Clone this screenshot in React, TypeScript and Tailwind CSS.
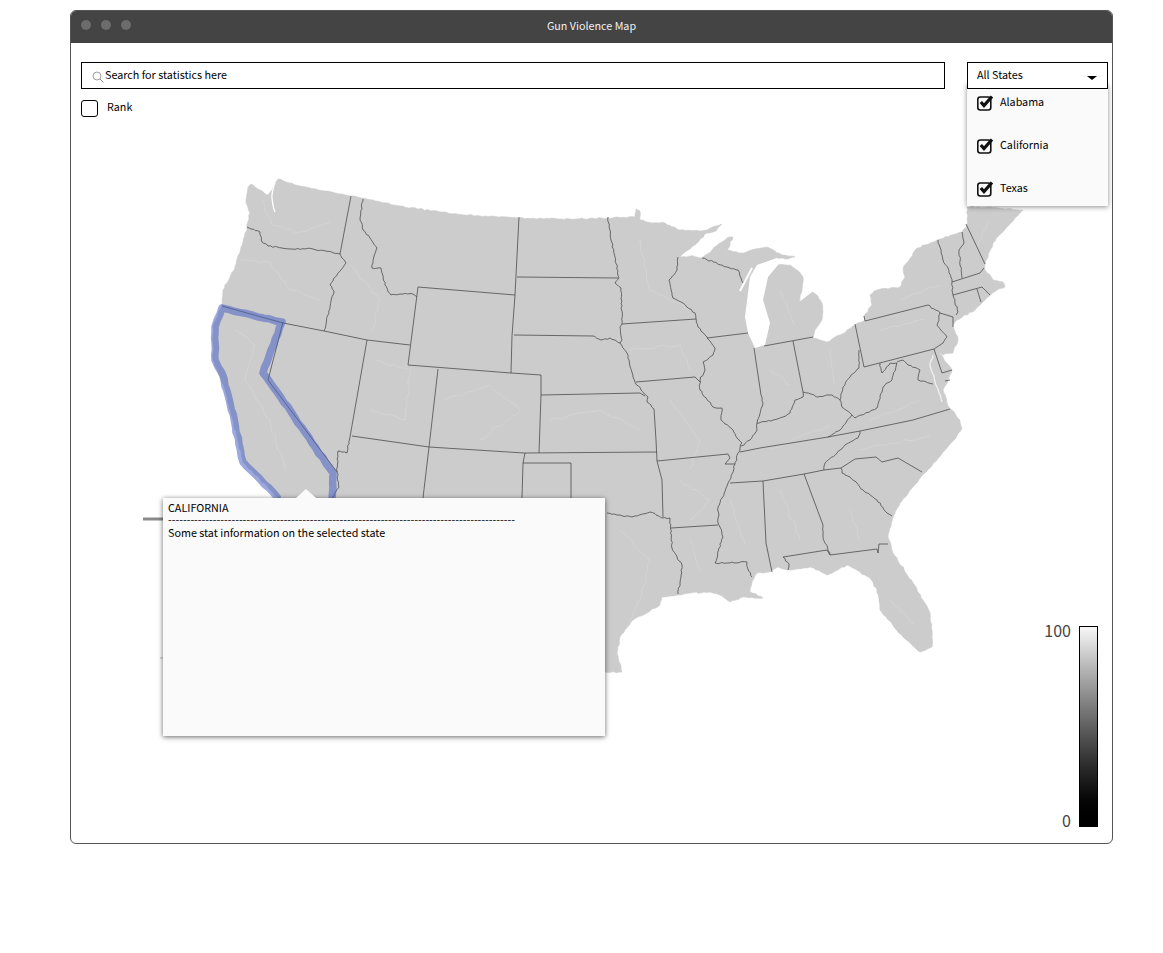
const FONT = "font-['Noto_Sans_CJK_JP','Noto_Sans',sans-serif]";

function wiggle(d: string, amp: number, step: number, seed: number) {
  let s = seed;
  const rnd = () => {
    s = (s * 16807) % 2147483647;
    return (s % 2000) / 1000 - 1;
  };
  const closed = d.trim().endsWith("Z");
  return d
    .replace("Z", "")
    .split("M")
    .filter((p) => p.trim())
    .map((sub) => {
      const pts = sub
        .trim()
        .split("L")
        .map((p) => p.trim().split(",").map(Number));
      let out = `M${pts[0][0]},${pts[0][1]}`;
      for (let i = 1; i < pts.length; i++) {
        const [x0, y0] = pts[i - 1];
        const [x1, y1] = pts[i];
        const len = Math.hypot(x1 - x0, y1 - y0);
        const n = Math.max(1, Math.round(len / step));
        for (let k = 1; k <= n; k++) {
          const t = k / n;
          const j = k === n ? 0 : amp;
          out += ` L${(x0 + (x1 - x0) * t + rnd() * j).toFixed(1)},${(y0 + (y1 - y0) * t + rnd() * j).toFixed(1)}`;
        }
      }
      return out + (closed ? " Z" : "");
    })
    .join(" ");
}

const OUTLINE =
  "M248,187 L251,184 L258,189 L268,195 L272,190 L276,182 L278,179 L300,186 L325,191 L351,196 L361,198 L400,206 L440,212 L480,216 L519,218 L570,219 L608,218 L635,217 L636,209 L640,211 L640,220 L653,223 L665,223 L680,230 L700,231 L707,230 L722,224 L716,231 L707,233 L695,245 L685,252 L680,257 L690,256 L702,258 L712,250 L727,238 L733,237 L727,250 L743,253 L755,249 L767,247 L775,251 L782,255 L795,257 L785,259 L777,258 L768,262 L778,265 L790,265 L797,270 L803,277 L802,290 L799,302 L806,297 L812,292 L818,296 L822,303 L823,312 L822,320 L815,330 L813,338 L820,340 L827,342 L840,335 L855,325 L865,320 L864,316 L872,305 L870,295 L877,290 L900,287 L905,277 L903,268 L917,248 L937,240 L962,232 L967,225 L967,207 L990,207 L1023,210 L1015,218 L1007,227 L993,243 L985,265 L985,270 L993,280 L1003,282 L1005,287 L997,290 L988,297 L983,302 L975,310 L957,320 L953,325 L958,340 L953,353 L943,355 L938,351 L952,370 L948,380 L943,390 L947,403 L952,410 L960,420 L962,428 L956,438 L947,448 L930,468 L913,487 L900,503 L893,517 L888,535 L893,553 L913,583 L923,600 L930,613 L932,637 L932,647 L920,652 L913,646 L903,637 L880,610 L877,590 L870,578 L847,565 L827,575 L810,567 L788,570 L778,567 L770,572 L757,573 L752,582 L750,592 L763,598 L743,597 L730,602 L722,596 L710,592 L690,593 L677,595 L662,597 L660,605 L633,620 L620,637 L617,653 L622,672 L605,672 L590,650 L570,610 L560,600 L520,590 L500,580 L470,590 L440,560 L400,540 L330,530 L290,505 L277,497 L243,462 L232,417 L225,390 L213,360 L213,327 L222,305 L223,290 L235,267 L247,228 L250,213 L246,200 Z";

const STRAIGHT = [
  "M222,306 L283,323 L324,331 L367,340 L410,345",
  "M351,196 L340,254",
  "M418,287 L515,295 L512,336 L511,373 L408,365 Z",
  "M519,217 L515,295",
  "M517,277 L618,278",
  "M514,335 L593,336",
  "M511,373 L541,375 L541,395 L640,393 L645,396",
  "M438,369 L429,447 L423,498",
  "M541,395 L539,453",
  "M352,436 L429,447 L524,453 L657,452",
  "M525,453 L523,463 L571,463 L571,498",
  "M523,463 L522,498",
  "M671,528 L718,525",
  "M657,461 L728,454 L730,458 L725,464 L735,464",
  "M622,324 L696,319",
  "M636,382 L695,377 L700,382",
  "M707,338 L748,333",
  "M654,409 L656,440 L657,461 L662,480 L663,517",
  "M730,483 L763,481 L804,474 L824,470 L841,468 L855,459 L876,457 L882,462 L898,458 L922,472",
  "M763,481 L766,543 L772,572",
  "M804,474 L823,525",
  "M783,557 L827,550 L830,555 L877,549 L878,553 L879,544 L888,544",
  "M740,452 L760,448 L828,437 L860,431 L913,420 L950,409",
  "M855,324 L864,367 L934,349 L943,343",
  "M928,305 L865,321 L864,316",
  "M934,349 L942,373 L952,370",
  "M945,381 L950,380",
  "M754,348 L761,395",
  "M793,341 L803,392",
  "M764,346 L813,337",
  "M966,224 L985,264",
  "M952,282 L980,273 L984,268",
  "M953,295 L982,287 L990,295",
  "M977,289 L981,302",
  "M283,322 L268,380 L337,472",
  "M367,340 L350,437",
  "M940,313 L953,317 L953,327",
];

const RIVERS = [
  "M247,227 L260,232 L262,242 L268,246 L282,248 L292,249 L313,249 L340,254",
  "M340,254 L342,258 L346,263 L337,275 L330,285 L334,291 L324,331",
  "M363,199 L360,218 L363,230 L370,238 L377,248 L374,256 L373,263 L372,268 L381,268 L385,285 L391,295 L400,294 L413,294 L417,297",
  "M608,217 L611,240 L615,257 L619,278 L615,283 L621,288 L622,324 L620,327 L622,340 L620,343",
  "M593,336 L601,340 L610,338 L620,343 L627,353 L633,377 L635,382 L641,390 L648,397 L647,402 L654,409",
  "M607,513 L620,515 L632,517 L650,512 L663,518 L670,518 L672,548 L682,565 L680,583 L678,594",
  "M678,257 L677,270 L669,280 L673,298 L683,303 L695,313 L698,327 L707,337 L715,348 L713,355 L703,362 L705,370 L700,380 L700,390 L713,407 L722,408 L721,420 L733,430 L737,438 L742,443 L738,453 L735,464 L731,478 L726,488 L722,498 L718,507 L719,515 L718,523 L723,537 L719,548 L715,563 L747,562 L748,569 L752,577",
  "M702,258 L727,267 L738,270 L741,278 L743,283",
  "M841,468 L842,473 L850,477 L863,490 L877,500 L887,513 L892,516",
  "M823,525 L823,537 L830,555",
  "M783,557 L789,564 L788,570",
  "M824,470 L825,463 L837,453 L845,445 L858,438 L860,431",
  "M828,437 L840,430 L852,415 L842,407 L840,400",
  "M741,446 L750,440 L757,430 L757,423 L773,420 L783,417 L790,413 L795,400 L803,397 L803,392 L818,397 L832,395 L840,400",
  "M852,415 L855,418 L877,408 L883,387 L892,380 L897,363 L890,363 L882,373 L880,363",
  "M840,400 L843,387 L850,377 L859,368 L859,350",
  "M943,343 L947,337 L937,325 L940,313 L928,305",
  "M897,362 L903,360 L908,365 L920,370 L918,380 L933,384",
  "M761,395 L763,403 L757,423",
  "M938,240 L943,260 L948,268 L952,282 L953,295 L958,312 L956,315",
  "M962,232 L964,242 L959,250 L962,278",
  "M337,472 L339,487 L332,498",
  "M350,437 L347,453 L338,451 L337,472",
];

const FAINT = [
  "M262,200 L272,225 L300,232 L330,222",
  "M240,260 L270,262 L290,290 L320,300",
  "M235,330 L255,345 L245,380 L270,420 L285,470",
  "M350,265 L380,300 L372,330",
  "M375,360 L410,370 L405,420 L370,410",
  "M445,400 L490,385 L520,410 L480,440",
  "M550,420 L600,410 L640,430",
  "M640,240 L650,290 L690,310",
  "M630,350 L680,345 L690,370",
  "M670,400 L700,440 L690,470",
  "M680,480 L710,500 L690,520",
  "M620,530 L650,560 L640,600 L625,630",
  "M690,540 L700,570",
  "M730,500 L745,545",
  "M780,490 L800,540",
  "M850,510 L860,540",
  "M890,600 L915,625",
  "M770,370 L790,385",
  "M780,290 L795,325",
  "M830,350 L835,385",
  "M880,330 L925,320",
  "M870,420 L920,400",
  "M900,300 L940,285",
  "M990,220 L975,250",
  "M770,450 L830,425",
  "M860,450 L930,435",
];

function CheckIcon() {
  return (
    <svg width="17" height="17" viewBox="0 0 17 17" className="shrink-0">
      <rect x="0.8" y="3" width="13" height="13" rx="2.5" fill="none" stroke="#111" strokeWidth="1.6" />
      <path d="M3.8 8 L7 11.6 L15 2.5" fill="none" stroke="#111" strokeWidth="3.2" />
    </svg>
  );
}

function MapDrawing() {
  return (
    <svg viewBox="71 43 1041 800" className="absolute left-0 top-0 w-[1041px] h-[800px]">
      <path d={wiggle(OUTLINE, 0.7, 3, 12345)} fill="#cccccc" stroke="#cccccc" strokeWidth="0.6" strokeLinejoin="round" />
      <path d="M777,258 L757,265 L750,277 L745,317 L748,333 L755,348 L765,345 L770,323 L763,300 L768,277 L778,265 Z" fill="#fff" />
      <path d="M752,268 L740,291" fill="none" stroke="#fff" strokeWidth="2" />
      <path d={wiggle("M274,186 L272,198 L275,212", 0.6, 3, 77)} fill="none" stroke="#fff" strokeWidth="1.3" />
      <path d={wiggle("M933,355 L930,364 L936,385 L942,402", 0.7, 3, 555)} fill="none" stroke="#eeeeee" strokeWidth="1.4" />
      {FAINT.map((d, i) => (
        <path key={d} d={wiggle(d, 1.6, 5, 101 + i * 37)} fill="none" stroke="#d4d4d4" strokeWidth="1" />
      ))}
      {STRAIGHT.map((d) => (
        <path key={d} d={d} fill="none" stroke="#4d4d4d" strokeWidth="0.8" strokeLinejoin="round" />
      ))}
      {RIVERS.map((d, i) => (
        <path key={d} d={wiggle(d, 0.7, 2.5, 991 + i * 53)} fill="none" stroke="#4d4d4d" strokeWidth="0.8" strokeLinejoin="round" />
      ))}
      <path
        d={wiggle("M222,308 L282,322 L263,373 L277,392 L333,473 L332,500 M222,308 L215,327 L215,360 L222,373 L230,403 L243,462 L277,497", 0.6, 6, 4242)}
        fill="none"
        stroke="#4a63c4"
        strokeOpacity="0.55"
        strokeWidth="7.5"
        strokeLinejoin="round"
        strokeLinecap="round"
      />
      <path d="M143,519 L163,519" stroke="#8a8a8a" strokeWidth="3" />
      <path d="M160,658 L163,658" stroke="#bbbbbb" strokeWidth="1" />
    </svg>
  );
}

export default function App() {
  return (
    <div className={`pl-[70px] pt-[10px] w-[1163px] h-[953px] bg-white ${FONT}`}>
      <div className="w-[1043px] h-[834px] border border-[#555] rounded-[6px] flex flex-col overflow-hidden bg-white">
        <div className="relative h-[32px] shrink-0 bg-[#444444] flex items-center pl-[10px] pb-[4px] gap-[10px]">
          <span className="w-[10px] h-[10px] rounded-full bg-[#6c6c6c]" />
          <span className="w-[10px] h-[10px] rounded-full bg-[#6c6c6c]" />
          <span className="w-[10px] h-[10px] rounded-full bg-[#6c6c6c]" />
          <span className="absolute inset-x-0 top-0 h-[30px] flex items-center justify-center text-[10.75px] text-[#f0f0f0]">
            Gun Violence Map
          </span>
        </div>
        <div className="relative flex-1 flex flex-col pt-[19px] pl-[10px] pr-[4px] pb-[16px]">
          <MapDrawing />
          <div className="relative flex gap-[22px] items-start">
            <div className="w-[864px] h-[27px] border border-black bg-white flex items-center pl-[10px] gap-[1px] text-[10.75px] text-black">
              <svg width="12" height="12" viewBox="0 0 12 12" className="mt-[2px]">
                <circle cx="5" cy="5" r="4" fill="none" stroke="#888" strokeWidth="0.8" />
                <path d="M8,8 L11.5,11.5" stroke="#888" strokeWidth="0.9" />
              </svg>
              <span>Search for statistics here</span>
            </div>
            <div className="relative w-[141px]">
              <div className="relative z-10 h-[27px] border border-black bg-white flex items-center justify-between pl-[9px] pr-[10px] text-[10.75px] text-black">
                <span>All States</span>
                <span className="mt-[4px] w-0 h-0 border-x-[5px] border-x-transparent border-t-[4px] border-t-black" />
              </div>
              <div className="absolute left-0 top-[22px] w-[141px] h-[122px] bg-[#fafafa] shadow-[0_1px_5px_rgba(0,0,0,0.45)] flex flex-col pl-[10px] text-[10.75px] text-black">
                <div className="-mt-[3px]">
                  {["Alabama", "California", "Texas"].map((s) => (
                    <div key={s} className="h-[43px] flex items-center gap-[6px] relative z-20">
                      <CheckIcon />
                      <span>{s}</span>
                    </div>
                  ))}
                </div>
              </div>
            </div>
          </div>
          <div className="relative mt-[11px] flex items-center gap-[9px] text-[10.75px] text-black">
            <span className="w-[17px] h-[17px] border border-black rounded-[3px] bg-white" />
            <span className="-mt-[2px]">Rank</span>
          </div>
          <div className="flex-1" />
          <div className="relative flex justify-end items-stretch gap-[8px] pr-[10px]">
            <div className="flex flex-col justify-between items-end text-[16px] leading-[20px] text-[#444] -mt-[6px] -mb-[3px]">
              <span>100</span>
              <span>0</span>
            </div>
            <div className="w-[19px] h-[201px] border border-black bg-gradient-to-b from-[#f8f8f8] to-black" />
          </div>
          <div className="absolute left-[92px] top-[455px] w-[442px] h-[238px] bg-[#fafafa] shadow-[0_1px_5px_rgba(0,0,0,0.6)] pl-[5px] pt-[2px] text-[10.75px] text-black">
            <span className="absolute left-[133px] -top-[9px] w-0 h-0 border-x-[10px] border-x-transparent border-b-[9px] border-b-[#fafafa]" />
            <div className="leading-[16px]">CALIFORNIA</div>
            <div className="h-[9px] whitespace-nowrap leading-[7px]">{"-".repeat(93)}</div>
            <div className="leading-[16px]">Some stat information on the selected state</div>
          </div>
        </div>
      </div>
    </div>
  );
}
